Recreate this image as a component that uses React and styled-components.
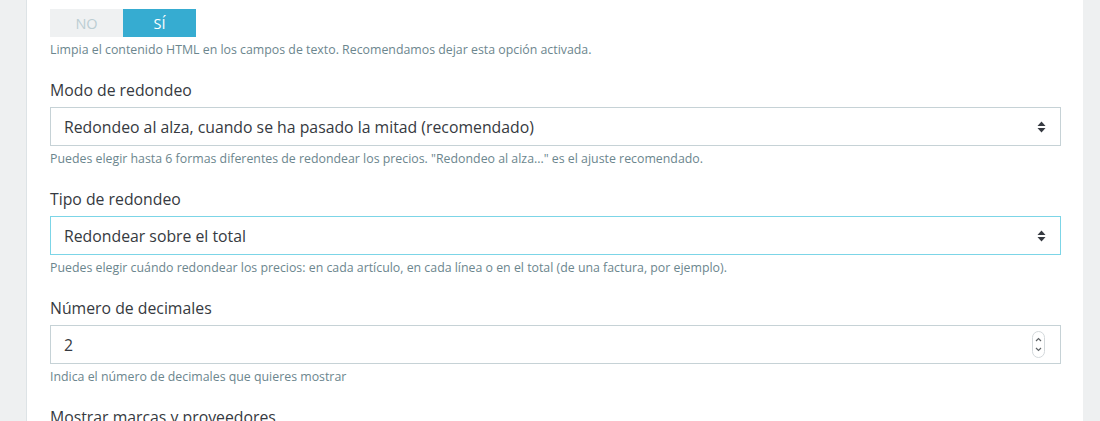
import React from 'react';
import styled, { createGlobalStyle } from 'styled-components';

const GlobalStyle = createGlobalStyle`
  html, body {
    margin: 0;
    padding: 0;
    background: #eef0f1;
    font-family: "Open Sans", "Noto Sans", sans-serif;
  }
`;

const Page = styled.div`
  height: 421px;
  overflow: hidden;
  padding-left: 26px;
`;

const Panel = styled.div`
  width: 1057px;
  height: 100%;
  box-sizing: border-box;
  background: #fff;
  border-left: 1px solid #dde3e6;
  padding: 9px 22px 0 23px;
`;

const Switch = styled.div`
  display: flex;
  width: 146px;
  height: 28px;
`;

const SwitchOption = styled.div`
  flex: 1;
  display: flex;
  align-items: center;
  justify-content: center;
  font-size: 14.5px;
  background: ${(p) => (p.active ? '#36acd1' : '#eff1f2')};
  color: ${(p) => (p.active ? '#fff' : '#bbcdd2')};
`;

const Help = styled.div`
  margin-top: 4px;
  font-size: 12.35px;
  line-height: 18px;
  color: #6c868e;
`;

const Group = styled.div`
  margin-top: 20px;
`;

const Label = styled.div`
  font-size: 15.8px;
  line-height: 22px;
  color: #363a41;
  margin-bottom: 6px;
`;

const Field = styled.div`
  height: 39px;
  box-sizing: border-box;
  border: 1px solid ${(p) => (p.focused ? '#7cd5e7' : '#c6d2d6')};
  display: flex;
  align-items: center;
  justify-content: space-between;
  padding: 0 14px 0 13px;
  font-size: 15.8px;
  color: #363a41;
  background: #fff;
`;

const Caret = () => (
  <svg width="9" height="12" viewBox="0 0 9 12">
    <path d="M4.5 0.5 L8.5 5 H0.5 Z" fill="#363a41" />
    <path d="M4.5 11.5 L8.5 7 H0.5 Z" fill="#363a41" />
  </svg>
);

const Spinner = () => (
  <svg width="13" height="27" viewBox="0 0 13 27" style={{ marginRight: 1 }}>
    <rect x="0.5" y="0.5" width="12" height="26" rx="6" fill="#fff" stroke="#d3d8db" />
    <path d="M4 10 L6.5 7.5 L9 10" fill="none" stroke="#5f6366" strokeWidth="1.2" />
    <path d="M4 17 L6.5 19.5 L9 17" fill="none" stroke="#5f6366" strokeWidth="1.2" />
  </svg>
);

export default function App() {
  return (
    <>
      <GlobalStyle />
      <Page>
        <Panel>
          <Switch>
            <SwitchOption>NO</SwitchOption>
            <SwitchOption active>SÍ</SwitchOption>
          </Switch>
          <Help>Limpia el contenido HTML en los campos de texto. Recomendamos dejar esta opción activada.</Help>

          <Group>
            <Label>Modo de redondeo</Label>
            <Field>
              <span>Redondeo al alza, cuando se ha pasado la mitad (recomendado)</span>
              <Caret />
            </Field>
            <Help>Puedes elegir hasta 6 formas diferentes de redondear los precios. "Redondeo al alza..." es el ajuste recomendado.</Help>
          </Group>

          <Group>
            <Label>Tipo de redondeo</Label>
            <Field focused>
              <span>Redondear sobre el total</span>
              <Caret />
            </Field>
            <Help>Puedes elegir cuándo redondear los precios: en cada artículo, en cada línea o en el total (de una factura, por ejemplo).</Help>
          </Group>

          <Group>
            <Label>Número de decimales</Label>
            <Field>
              <span>2</span>
              <Spinner />
            </Field>
            <Help>Indica el número de decimales que quieres mostrar</Help>
          </Group>

          <Group>
            <Label>Mostrar marcas y proveedores</Label>
          </Group>
        </Panel>
      </Page>
    </>
  );
}
